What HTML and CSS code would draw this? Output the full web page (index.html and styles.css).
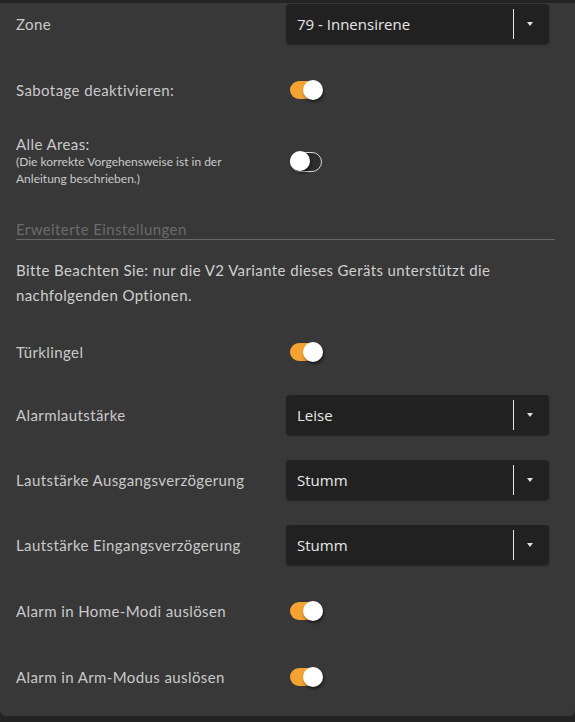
FILE: index.html
```html
<!DOCTYPE html>
<html lang="de">
<head>
<meta charset="utf-8">
<title>Einstellungen</title>
<link rel="stylesheet" href="styles.css">
</head>
<body>
<div class="card">
  <div class="row first">
    <div class="label">Zone</div>
    <div class="select"><span class="value">79 - Innensirene</span><span class="sep"></span><span class="caret"></span></div>
  </div>
  <div class="row g26">
    <div class="label">Sabotage deaktivieren:</div>
    <div class="toggle on"><span class="knob"></span></div>
  </div>
  <div class="row g26 tall">
    <div class="label">Alle Areas:<div class="hint">(Die korrekte Vorgehensweise ist in der<br>Anleitung beschrieben.)</div></div>
    <div class="toggle off"><span class="knob"></span></div>
  </div>
  <div class="section">Erweiterte Einstellungen</div>
  <p class="note">Bitte Beachten Sie: nur die V2 Variante dieses Geräts unterstützt die nachfolgenden Optionen.</p>
  <div class="row g24">
    <div class="label">Türklingel</div>
    <div class="toggle on"><span class="knob"></span></div>
  </div>
  <div class="row g23">
    <div class="label">Alarmlautstärke</div>
    <div class="select"><span class="value">Leise</span><span class="sep"></span><span class="caret"></span></div>
  </div>
  <div class="row">
    <div class="label">Lautstärke Ausgangsverzögerung</div>
    <div class="select"><span class="value">Stumm</span><span class="sep"></span><span class="caret"></span></div>
  </div>
  <div class="row">
    <div class="label">Lautstärke Eingangsverzögerung</div>
    <div class="select"><span class="value">Stumm</span><span class="sep"></span><span class="caret"></span></div>
  </div>
  <div class="row g26">
    <div class="label">Alarm in Home-Modi auslösen</div>
    <div class="toggle on"><span class="knob"></span></div>
  </div>
  <div class="row g26">
    <div class="label">Alarm in Arm-Modus auslösen</div>
    <div class="toggle on"><span class="knob"></span></div>
  </div>
</div>
</body>
</html>
```
FILE: styles.css
```css
html, body {
  margin: 0;
  padding: 0;
  background: #232323;
  height: 100%;
}
body {
  font-family: "Lato", "Liberation Sans", sans-serif;
  color: #cacaca;
}
.card {
  margin-top: 3px;
  width: 100%;
  box-sizing: border-box;
  background: #383838;
  border-radius: 0 0 6px 6px;
  padding: 1px 20px 19px 16px;
}
.row {
  display: flex;
  align-items: center;
  min-height: 40px;
  margin-top: 25px;
}
.row.first { margin-top: 0; }
.row.g26 { margin-top: 26px; }
.row.g24 { margin-top: 24px; }
.row.g23 { margin-top: 23px; }
.row.tall { min-height: 51px; }
.label {
  width: 270px;
  flex: none;
  font-size: 15px;
  line-height: 17px;
  letter-spacing: 0.4px;
  color: #cacaca;
}
.hint {
  font-size: 12px;
  line-height: 17px;
  letter-spacing: 0;
}
.select {
  width: 263px;
  height: 40px;
  box-sizing: border-box;
  background: #212121;
  border-radius: 4px;
  box-shadow: 0 1px 2px rgba(0,0,0,0.35);
  display: flex;
  align-items: center;
  padding-left: 11px;
  font-family: "Open Sans", "Noto Sans", sans-serif;
  font-size: 15px;
  color: #e8e8e8;
}
.value { flex: 1; }
.sep {
  width: 1px;
  height: 30px;
  background: #e6e6e6;
  margin-right: 13px;
}
.caret {
  width: 0;
  height: 0;
  border-left: 3.5px solid transparent;
  border-right: 3.5px solid transparent;
  border-top: 4px solid #e0e0e0;
  margin-right: 16px;
}
.toggle {
  position: relative;
  margin-left: 4px;
  width: 32px;
  height: 18px;
  border-radius: 10px;
  box-sizing: border-box;
}
.toggle.on { background: #f4a332; }
.toggle.off {
  height: 20px;
  border: 1.5px solid #d8d8d8;
  background: #2e2e2e;
}
.knob {
  position: absolute;
  width: 20px;
  height: 20px;
  border-radius: 50%;
  background: #ffffff;
  box-shadow: 1px 2px 3px rgba(0,0,0,0.55);
}
.toggle.on .knob { right: -1px; top: -1px; }
.toggle.off .knob { left: -1.5px; top: -1.5px; }
.section {
  padding-top: 6px;
  margin-top: 26px;
  font-size: 15px;
  line-height: 20px;
  letter-spacing: 0.4px;
  color: #6b6b6b;
  border-bottom: 1px solid #676767;
}
.note {
  margin: 18px 0 0;
  font-size: 15px;
  line-height: 25px;
  letter-spacing: 0.4px;
  color: #cfcfcf;
}
```
